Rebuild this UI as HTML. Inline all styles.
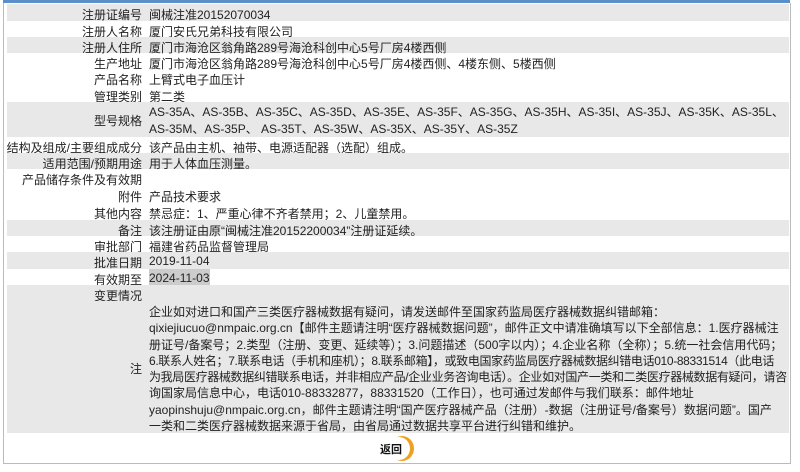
<!DOCTYPE html>
<html><head><meta charset="utf-8"><style>
body{margin:0;width:800px;height:472px;background:#fff;font-family:"Liberation Sans","Noto Sans CJK SC",sans-serif;font-size:12px;color:#222;position:relative;overflow:hidden}
.top{position:absolute;left:3px;top:0;width:787px;height:3px;background:#5b8fc9}
.frame{position:absolute;left:3px;top:3px;width:786px;height:460px;border-left:1px solid #bbb;border-right:1px solid #bbb;border-bottom:1px solid #bbb}
.r{position:absolute;left:7px;width:782px;}
.g{background:#e8e8e8}
.l{position:absolute;left:0;width:135px;text-align:right;white-space:nowrap}
.v{position:absolute;left:142px;white-space:nowrap}
.hl{background:#ccc}
.t{letter-spacing:-0.35px}
</style></head><body>
<div class="top"></div><div class="frame"></div>
<div class="r g" style="top:4px;height:17px"><span class="l" style="top:2px">注册证编号</span><span class="v" style="top:2px">闽械注准20152070034</span></div>
<div class="r" style="top:21px;height:16px"><span class="l" style="top:2px">注册人名称</span><span class="v" style="top:2px">厦门安氏兄弟科技有限公司</span></div>
<div class="r g" style="top:37px;height:16px"><span class="l" style="top:2px">注册人住所</span><span class="v" style="top:2px">厦门市海沧区翁角路289号海沧科创中心5号厂房4楼西侧</span></div>
<div class="r" style="top:53px;height:16px"><span class="l" style="top:2px">生产地址</span><span class="v" style="top:2px">厦门市海沧区翁角路289号海沧科创中心5号厂房4楼西侧、4楼东侧、5楼西侧</span></div>
<div class="r" style="top:69px;height:17px"><span class="l" style="top:2px">产品名称</span><span class="v" style="top:2px">上臂式电子血压计</span></div>
<div class="r" style="top:86px;height:16px"><span class="l" style="top:2px">管理类别</span><span class="v" style="top:2px">第二类</span></div>
<div class="r g" style="top:102px;height:35px"><span class="l" style="top:10px">型号规格</span><span class="v" style="top:2px;line-height:16.5px">AS-35A、AS-35B、AS-35C、AS-35D、AS-35E、AS-35F、AS-35G、AS-35H、AS-35I、AS-35J、AS-35K、AS-35L、<br>AS-35M、AS-35P、 AS-35T、AS-35W、AS-35X、AS-35Y、AS-35Z</span></div>
<div class="r" style="top:137px;height:16px"><span class="l" style="top:2px;left:-4px;width:139px">结构及组成/主要组成成分</span><span class="v" style="top:2px">该产品由主机、袖带、电源适配器（选配）组成。</span></div>
<div class="r g" style="top:153px;height:16px"><span class="l" style="top:2px">适用范围/预期用途</span><span class="v" style="top:2px">用于人体血压测量。</span></div>
<div class="r" style="top:169px;height:17px"><span class="l" style="top:2px">产品储存条件及有效期</span></div>
<div class="r" style="top:186px;height:17px"><span class="l" style="top:2px">附件</span><span class="v" style="top:2px">产品技术要求</span></div>
<div class="r" style="top:203px;height:17px"><span class="l" style="top:2px">其他内容</span><span class="v" style="top:2px">禁忌症：1、严重心律不齐者禁用；2、儿童禁用。</span></div>
<div class="r g" style="top:220px;height:16px"><span class="l" style="top:2px">备注</span><span class="v" style="top:2px">该注册证由原“闽械注准20152200034”注册证延续。</span></div>
<div class="r" style="top:236px;height:16px"><span class="l" style="top:2px">审批部门</span><span class="v" style="top:2px">福建省药品监督管理局</span></div>
<div class="r g" style="top:252px;height:17px"><span class="l" style="top:2px">批准日期</span><span class="v" style="top:2px">2019-11-04</span></div>
<div class="r" style="top:269px;height:16px"><span class="l" style="top:2px">有效期至</span><span class="v hl" style="top:0px;padding:2px 0 1px">2024-11-03</span></div>
<div class="r g" style="top:285px;height:16px"><span class="l" style="top:2px">变更情况</span></div>
<div class="r g" style="top:301px;height:132px"><span class="l" style="top:59px">注</span><div style="position:absolute;left:142px;top:3px;line-height:16.3px;white-space:nowrap">企业如对进口和国产三类医疗器械数据有疑问，请发送邮件至国家药监局医疗器械数据纠错邮箱：<br>qixiejiucuo@nmpaic.org.cn【邮件主题请注明“医疗器械数据问题”，邮件正文中请准确填写以下全部信息：1.医疗器械注<br>册证号/备案号；2.类型（注册、变更、延续等）；3.问题描述（500字以内）；4.企业名称（全称）；5.统一社会信用代码；<br><span class="t">6.联系人姓名；7.联系电话（手机和座机）；8.联系邮箱】，或致电国家药监局医疗器械数据纠错电话010-88331514（此电话</span><br><span class="t">为我局医疗器械数据纠错联系电话，并非相应产品/企业业务咨询电话）。企业如对国产一类和二类医疗器械数据有疑问，请咨</span><br>询国家局信息中心，电话010-88332877，88331520（工作日），也可通过发邮件与我们联系：邮件地址<br>yaopinshuju@nmpaic.org.cn，邮件主题请注明“国产医疗器械产品（注册）-数据（注册证号/备案号）数据问题”。国产<br>一类和二类医疗器械数据来源于省局，由省局通过数据共享平台进行纠错和维护。</div></div>
<div style="position:absolute;left:390px;top:436px;width:24px;height:25px;border-radius:50%;background:#f0a020"></div>
<div style="position:absolute;left:388px;top:437px;width:22px;height:23px;border-radius:50%;background:#fff"></div>
<div style="position:absolute;left:380px;top:441px;font-size:11px;font-weight:bold;color:#111">返回</div>
</body></html>
